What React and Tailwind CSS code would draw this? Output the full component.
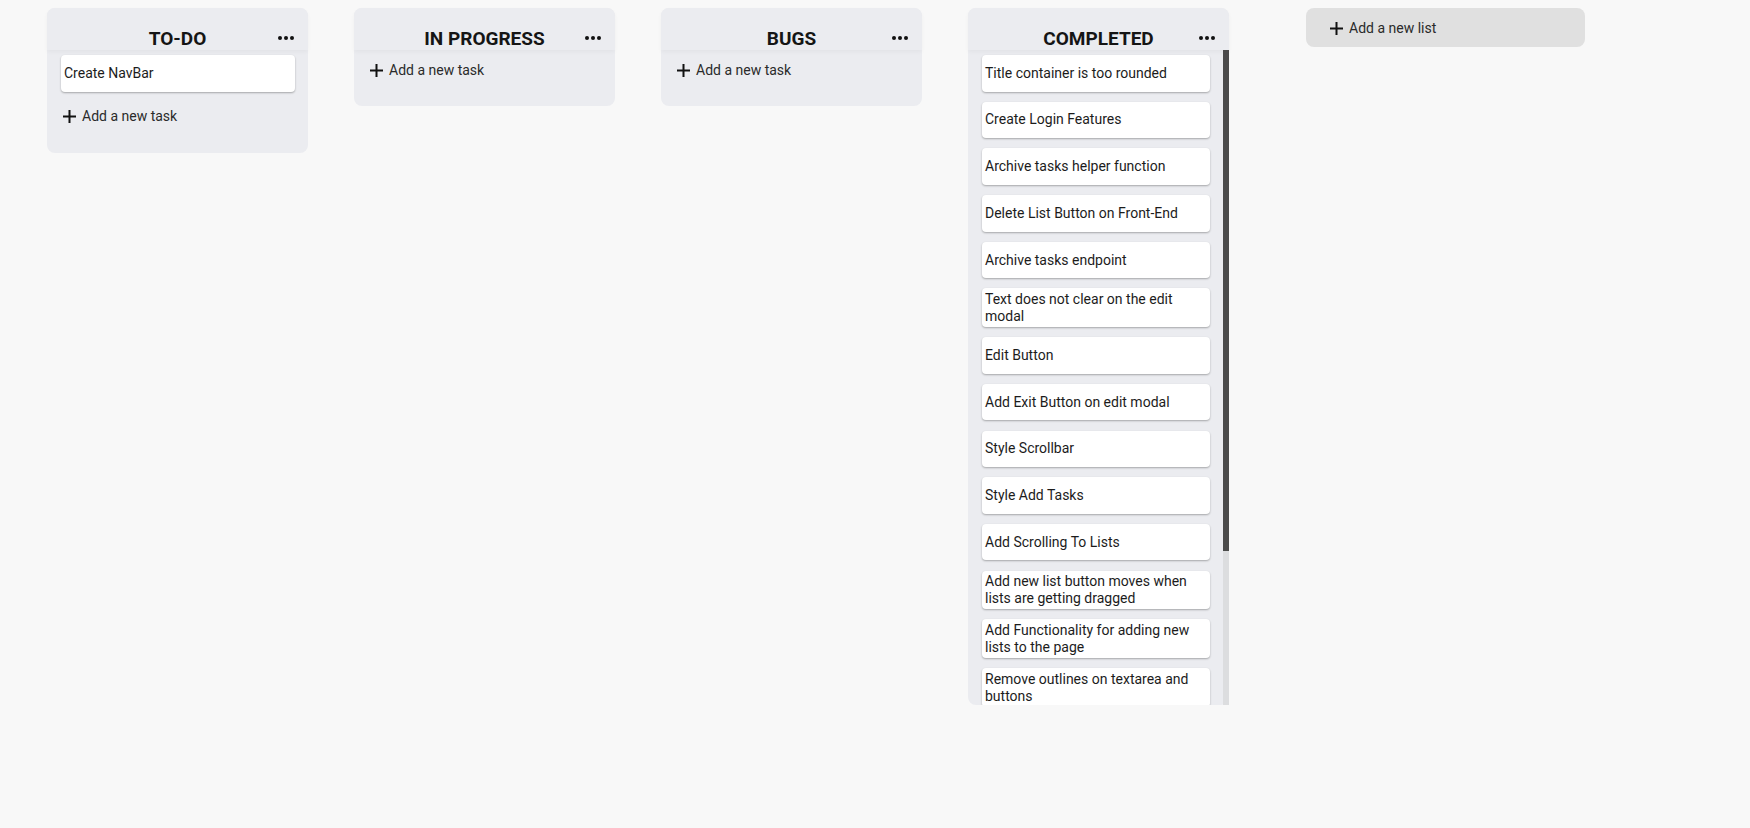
import React from 'react';

const lists = [
    { id: 'todo', title: 'TO-DO', tasks: ['Create NavBar'] },
    { id: 'progress', title: 'IN PROGRESS', tasks: [] },
    { id: 'bugs', title: 'BUGS', tasks: [] },
    {
        id: 'completed',
        title: 'COMPLETED',
        scroll: true,
        tasks: [
            'Title container is too rounded',
            'Create Login Features',
            'Archive tasks helper function',
            'Delete List Button on Front-End',
            'Archive tasks endpoint',
            'Text does not clear on the edit modal',
            'Edit Button',
            'Add Exit Button on edit modal',
            'Style Scrollbar',
            'Style Add Tasks',
            'Add Scrolling To Lists',
            'Add new list button moves when lists are getting dragged',
            'Add Functionality for adding new lists to the page',
            'Remove outlines on textarea and buttons',
        ],
    },
];

const Plus = () => (
    <svg width="13" height="13" viewBox="0 0 13 13" className="shrink-0">
        <path d="M6.5 0v13M0 6.5h13" stroke="#111" strokeWidth="2" />
    </svg>
);

const Dots = () => (
    <svg width="16" height="4" viewBox="0 0 16 4" className="absolute right-[14px] top-[28px]">
        <circle cx="2" cy="2" r="2" fill="#111" />
        <circle cx="8" cy="2" r="2" fill="#111" />
        <circle cx="14" cy="2" r="2" fill="#111" />
    </svg>
);

const TaskList = ({ title, tasks, scroll }) => (
    <div className={`w-[261px] shrink-0 bg-[#ebecf0] rounded-lg flex flex-col ${scroll ? 'h-[697px]' : ''}`}>
        {/* Header */}
        <div className="relative h-[42px] shrink-0 rounded-t-lg bg-[#ebecf0] shadow-[0_2px_4px_rgba(0,0,0,0.04)]">
            <h2 className="pt-[20px] text-center text-[19px] leading-[22px] font-bold text-[#151515]">{title}</h2>
            <Dots />
        </div>

        {/* Tasks */}
        <div className="relative flex-1 min-h-0">
            <div className={`h-full overflow-y-auto [scrollbar-width:none] pl-[14px] pt-[5px] pb-[21px] ${scroll ? 'pr-[19px]' : 'pr-[13px]'}`}>
                {tasks.map((task) => (
                    <div
                        key={task}
                        className="mb-[10.2px] min-h-[36.5px] flex items-center px-[3px] py-[2.3px] bg-white rounded-[4px] shadow-[0_1px_2px_rgba(0,0,0,0.3)] text-[14px] leading-[17px] text-[#1c1c1c]"
                    >
                        {task}
                    </div>
                ))}
                <button className="flex items-center gap-[6px] h-[30px] ml-[2px] text-[14px] text-[#2a2a2a]">
                    <Plus />
                    Add a new task
                </button>
            </div>

            {/* scrollbar */}
            {scroll && (
                <div className="absolute right-0 top-0 bottom-0 w-[6px] bg-[#dcdddf]">
                    <div className="h-[501px] w-full bg-[#4b4b4b]" />
                </div>
            )}
        </div>
    </div>
);

export default function App() {
    return (
        <div className="min-h-screen bg-[#f8f8f8] font-['Roboto',sans-serif] flex items-start gap-[46px] pl-[47px] pt-[8px]">
            {lists.map((list) => (
                <TaskList key={list.id} {...list} />
            ))}

            <button className="ml-[31px] w-[279px] h-[39px] shrink-0 flex items-center gap-[6px] pl-[24px] pt-[1px] bg-[#e0e0e0] rounded-lg text-[14px] text-[#2a2a2a]">
                <Plus />
                Add a new list
            </button>
        </div>
    );
}
